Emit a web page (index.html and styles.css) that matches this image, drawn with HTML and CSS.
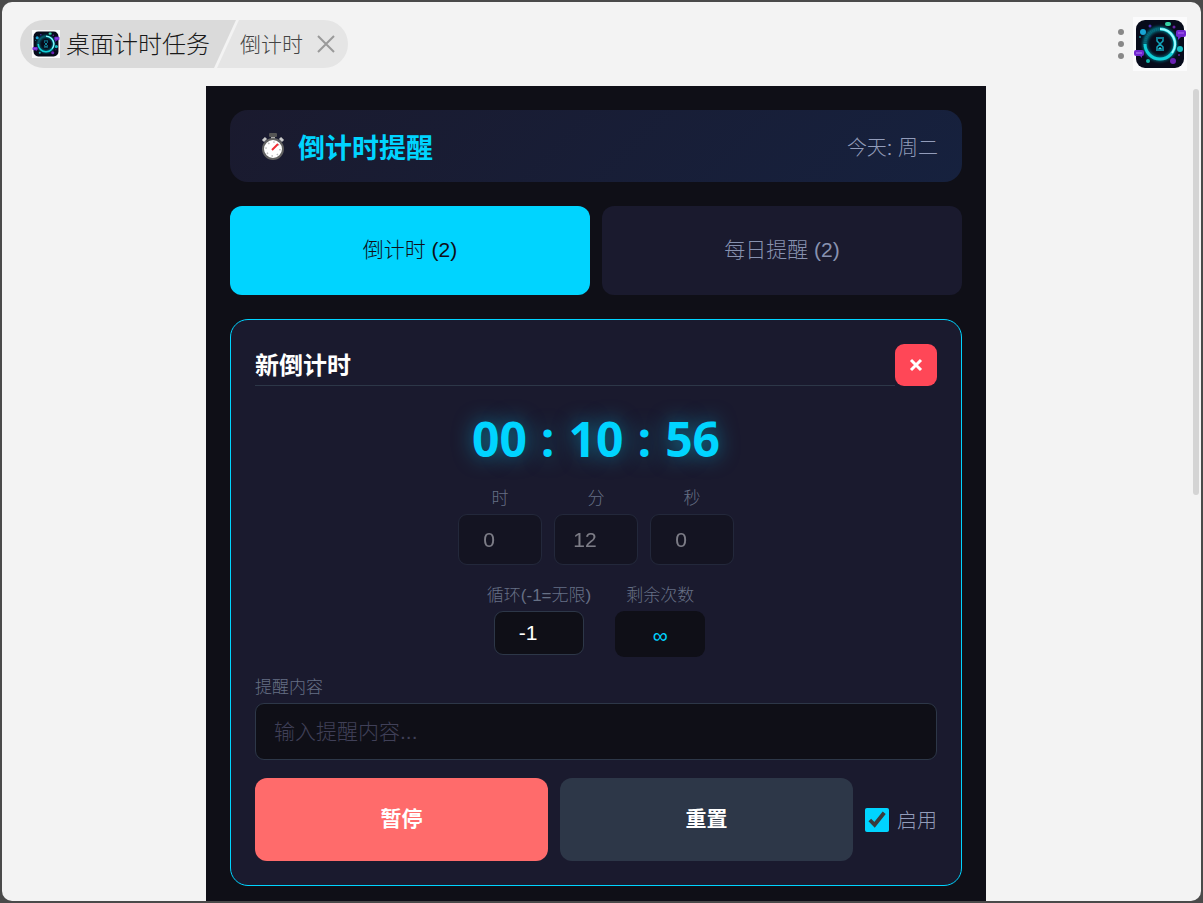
FILE: index.html
```html
<!DOCTYPE html>
<html lang="zh-CN">
<head>
    <meta charset="UTF-8">
    <meta name="viewport" content="width=device-width, initial-scale=1.0">
    <title>桌面计时任务 - 倒计时</title>
    <link rel="stylesheet" href="styles.css">
</head>
<body>
    <svg width="0" height="0" class="defs" aria-hidden="true">
        <defs>
            <filter id="glow" x="-30%" y="-30%" width="160%" height="160%">
                <feGaussianBlur stdDeviation="1.6"/>
            </filter>
        </defs>
        <symbol id="logo" viewBox="0 0 54 54">
            <rect width="54" height="54" fill="#fbfbfc"/>
            <rect x="3" y="3" width="48" height="48" rx="9" fill="#070b1b"/>
            <circle cx="27" cy="27" r="15" fill="none" stroke="#00a9b8" stroke-width="5" opacity=".6" filter="url(#glow)"/>
            <circle cx="27" cy="27" r="15" fill="none" stroke="#0a6a7c" stroke-width="3" stroke-dasharray="1 1"/>
            <path d="M27 12a15 15 0 1 1-15 15" fill="none" stroke="#12cfd8" stroke-width="3"/>
            <path d="M27 12a15 15 0 0 1 12 24" fill="none" stroke="#9ffcff" stroke-width="2"/>
            <path d="M23 21h8M23 33h8M24 22v2l3 3-3 3v2M30 22v2l-3 3 3 3v2" fill="none" stroke="#12a5bd" stroke-width="1.5"/>
            <path d="M25 32l2-2 2 2z" fill="#35dbe5"/>
            <rect x="43" y="13" width="10" height="7" rx="2" fill="#7127cf"/>
            <path d="M45 19v4l4-4z" fill="#7127cf"/>
            <path d="M45 16h6" stroke="#b06bf4"/>
            <rect x="1" y="33" width="10" height="6" rx="2" fill="#7127cf"/>
            <path d="M6 38l3 3v-4z" fill="#7127cf"/>
            <path d="M3 36h6" stroke="#b889f5"/>
            <rect x="32" y="5" width="6" height="4" rx="2" fill="#36d3a6"/>
            <circle cx="10" cy="15" r="3" fill="#19a5d5"/>
            <circle cx="47" cy="32" r="3" fill="#15bfc4"/>
            <circle cx="40" cy="44" r="3" fill="#6a22b4"/>
            <circle cx="15" cy="44" r="2" fill="#16b7ad"/>
            <circle cx="17" cy="9" r="1.5" fill="#4930b6"/>
            <circle cx="41" cy="10" r="1.5" fill="#6623a5"/>
            <circle cx="7" cy="20" r="1" fill="#158b95"/>
            <circle cx="46" cy="38" r="1" fill="#62299b"/>
        </symbol>
    </svg>

    <div class="window">
        <header class="topbar">
            <nav class="crumbs">
                <a class="crumb crumb-app" href="#">
                    <svg class="crumb-logo" aria-hidden="true"><use href="#logo"/></svg>
                    <span>桌面计时任务</span>
                </a>
                <div class="crumb crumb-page">
                    <span>倒计时</span>
                    <button class="crumb-close" type="button" aria-label="关闭">
                        <svg width="18" height="18" viewBox="0 0 18 18"><path d="M1 1l16 16M17 1L1 17" stroke="#999" stroke-width="2"/></svg>
                    </button>
                </div>
            </nav>
            <div class="topbar-right">
                <button class="menu" type="button" aria-label="菜单">
                    <svg width="6" height="30" viewBox="0 0 6 30" fill="#888"><circle cx="3" cy="3" r="3"/><circle cx="3" cy="15" r="3"/><circle cx="3" cy="27" r="3"/></svg>
                </button>
                <svg class="avatar" aria-hidden="true"><use href="#logo"/></svg>
            </div>
        </header>

        <div class="viewport">
            <main class="app">
                <section class="banner">
                    <h1>
                        <svg width="26" height="28" viewBox="0 0 26 28" aria-hidden="true">
                            <path d="M3 9l3-3M23 9l-3-3" stroke="#c9c9c9" stroke-width="3"/>
                            <rect x="11" y="3" width="4" height="4" fill="#aaa"/>
                            <rect x="9" y="1" width="8" height="4" rx="1" fill="#555"/>
                            <circle cx="13" cy="17" r="10" fill="#fff" stroke="#626262" stroke-width="2"/>
                            <circle cx="13" cy="17" r="7" fill="none" stroke="#bbb" stroke-width="1.5" stroke-dasharray="1.5 4"/>
                            <path d="M12 18l6-6" stroke="#f02e35" stroke-width="2"/>
                        </svg>
                        倒计时提醒
                    </h1>
                    <span class="today">今天: 周二</span>
                </section>

                <div class="tabs">
                    <button class="tab active" type="button">倒计时 (2)</button>
                    <button class="tab" type="button">每日提醒 (2)</button>
                </div>

                <form class="card">
                    <div class="card-head">
                        <h2>新倒计时</h2>
                        <button class="delete" type="button" aria-label="删除">
                            <svg width="14" height="14" viewBox="0 0 14 14"><path d="M2 2l10 10M12 2L2 12" stroke="#fff" stroke-width="3"/></svg>
                        </button>
                    </div>

                    <div class="clock">
                        <span>00</span><span>:</span><span>10</span><span>:</span><span>56</span>
                    </div>

                    <div class="row time-row">
                        <div class="field">
                            <label for="hours">时</label>
                            <input type="number" id="hours" value="0" disabled>
                        </div>
                        <div class="field">
                            <label for="minutes">分</label>
                            <input type="number" id="minutes" value="12" disabled>
                        </div>
                        <div class="field">
                            <label for="seconds">秒</label>
                            <input type="number" id="seconds" value="0" disabled>
                        </div>
                    </div>

                    <div class="row loop-row">
                        <div class="field">
                            <label for="loops">循环(-1=无限)</label>
                            <input type="number" id="loops" value="-1">
                        </div>
                        <div class="field">
                            <label for="remaining">剩余次数</label>
                            <output id="remaining">∞</output>
                        </div>
                    </div>

                    <div class="message">
                        <label for="content">提醒内容</label>
                        <input type="text" id="content" placeholder="输入提醒内容...">
                    </div>

                    <div class="actions">
                        <button class="btn pause" type="button">暂停</button>
                        <button class="btn reset" type="button">重置</button>
                        <label class="enable">
                            <input type="checkbox" checked>
                            启用
                        </label>
                    </div>
                </form>
            </main>
            <div class="scrollbar"><div class="thumb"></div></div>
        </div>
    </div>
</body>
</html>
```

FILE: styles.css
```css
* {
    box-sizing: border-box;
}

body {
    margin: 0;
    padding: 2px;
    height: 100vh;
    background: #4a4a4a;
    font-family: "Liberation Sans", "Noto Sans CJK SC", sans-serif;
    font-weight: 300;
}

h1, h2 {
    margin: 0;
}

button, input {
    font: inherit;
}

button {
    border: none;
    padding: 0;
    cursor: pointer;
}

.defs {
    position: absolute;
}

.window {
    height: 100%;
    display: flex;
    flex-direction: column;
    background: #f3f3f3;
    border-radius: 10px;
    overflow: hidden;
}

/* 顶部标题栏 */
.topbar {
    flex: none;
    height: 84px;
    padding: 0 14px 0 18px;
    display: flex;
    align-items: center;
    justify-content: space-between;
}

.crumbs {
    display: flex;
    height: 48px;
    border-radius: 24px;
    overflow: hidden;
}

.crumb {
    display: flex;
    align-items: center;
}

.crumb span {
    padding-bottom: 3px;
}

.crumb-app {
    gap: 6px;
    padding: 0 26px 0 12px;
    background: #dadada;
    color: #1a1a1a;
    font-size: 24px;
    text-decoration: none;
    clip-path: polygon(0 0, 100% 0, calc(100% - 22px) 100%, 0 100%);
}

.crumb-logo {
    width: 28px;
    height: 28px;
}

.crumb-page {
    gap: 14px;
    margin-left: -20px;
    padding: 0 13px 0 24px;
    background: #e5e5e5;
    color: #444;
    font-size: 21px;
    clip-path: polygon(23px 0, 100% 0, 100% 100%, 1px 100%);
}

.crumb-close, .menu {
    display: flex;
    background: none;
}

.topbar-right {
    display: flex;
    align-items: center;
    gap: 9px;
}

.avatar {
    width: 54px;
    height: 54px;
}

.viewport {
    flex: 1;
    min-height: 0;
    display: flex;
    overflow: hidden;
}

.scrollbar {
    width: 11px;
    padding: 3px 2px 0 3px;
}

.thumb {
    height: 50%;
    border-radius: 3px;
    background: #d4d4d4;
}

/* 主体 */
.app {
    flex: 1;
    max-width: 780px;
    height: max-content;
    margin: 0 auto;
    padding: 24px;
    background: #0f0f17;
}

.banner {
    display: flex;
    align-items: center;
    justify-content: space-between;
    height: 72px;
    padding: 0 24px 0 30px;
    border-radius: 18px;
    background: linear-gradient(135deg, #1a1a2e, #16213e);
}

.banner h1 {
    display: flex;
    align-items: center;
    gap: 12px;
    color: #00d4ff;
    font-size: 27px;
}

.today {
    color: #929cba;
    font-size: 20px;
}

.tabs {
    display: flex;
    gap: 12px;
    margin: 24px 0;
}

.tab {
    flex: 1;
    height: 89px;
    padding-bottom: 6px;
    border-radius: 12px;
    background: #1a1a2e;
    color: #8892b0;
    font-size: 21px;
}

.tab.active {
    background: #00d4ff;
    color: #0f0f17;
}

.card {
    padding: 24px;
    border: 1px solid #00d4ff;
    border-radius: 18px;
    background: #1a1a2e;
}

.card-head {
    display: flex;
    height: 42px;
    margin-bottom: 20px;
}

.card-head h2 {
    flex: 1;
    border-bottom: 1px solid #2d3748;
    color: #fff;
    font-size: 24px;
    line-height: 43px;
}

.delete {
    display: flex;
    align-items: center;
    justify-content: center;
    width: 42px;
    border-radius: 9px;
    background: #ff4757;
}

.clock {
    display: flex;
    justify-content: center;
    gap: 14px;
    margin-bottom: 14px;
    color: #00d4ff;
    font-family: "Open Sans", sans-serif;
    font-size: 48px;
    font-weight: 700;
    line-height: 66px;
    text-shadow: 0 0 20px rgba(0, 212, 255, 0.5);
}

.row {
    display: flex;
    justify-content: center;
    margin-bottom: 18px;
}

.time-row {
    gap: 12px;
}

.loop-row {
    gap: 24px;
}

.field, .message {
    display: flex;
    flex-direction: column;
    gap: 2px;
}

.field {
    align-items: center;
}

.field label, .message label {
    color: #667085;
    font-size: 17px;
    line-height: 26px;
}

.field input, .field output, .message input {
    border: 1px solid #2d3748;
    border-radius: 9px;
    background: #0f0f17;
    color: #fff;
    font-size: 21px;
}

.field input {
    padding: 0 22px 0 0;
    text-align: center;
    appearance: textfield;
}

.field input::-webkit-inner-spin-button {
    display: none;
}

.time-row input {
    width: 84px;
    height: 51px;
}

.time-row input:disabled {
    opacity: 0.5;
    color: #e0e0e0;
}

.loop-row input {
    width: 90px;
    height: 44px;
}

.field output {
    width: 90px;
    height: 46px;
    border: none;
    color: #00d4ff;
    line-height: 50px;
    text-align: center;
}

.message input {
    width: 100%;
    height: 57px;
    padding: 0 18px;
}

.message input::placeholder {
    color: #404058;
}

.actions {
    display: flex;
    align-items: center;
    gap: 12px;
    margin-top: 18px;
}

.btn {
    flex: 1;
    height: 83px;
    padding-bottom: 5px;
    border-radius: 12px;
    color: #fff;
    font-size: 21px;
    font-weight: 700;
}

.pause {
    background: #ff6b6b;
}

.reset {
    background: #2d3748;
}

.enable {
    display: flex;
    align-items: center;
    gap: 8px;
    color: #929cba;
    font-size: 20px;
}

.enable input {
    width: 24px;
    height: 24px;
    margin: 0;
    accent-color: #00d4ff;
}
```
